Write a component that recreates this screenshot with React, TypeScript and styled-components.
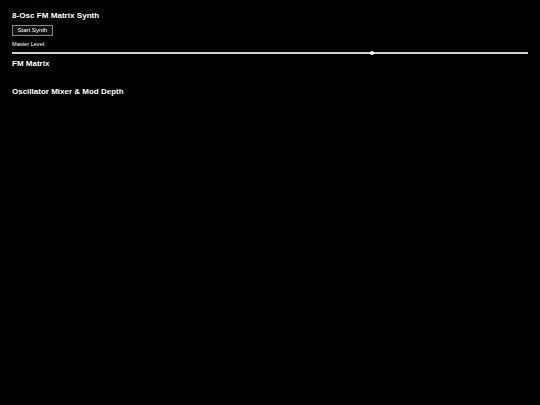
import React, { useState } from "react";
import styled, { createGlobalStyle } from "styled-components";

const GlobalStyle = createGlobalStyle`
  html, body {
    margin: 0;
    padding: 0;
    background: #000;
    color: #fff;
    font-family: "Liberation Sans", Arial, sans-serif;
  }
`;

const Page = styled.div`
  padding: 11px 12px;
  display: flex;
  flex-direction: column;
  align-items: flex-start;
`;

const Title = styled.h1`
  font-size: 8.1px;
  font-weight: bold;
  margin: 0;
  line-height: 10px;
`;

const Button = styled.button`
  font-family: inherit;
  font-size: 6px;
  color: #fff;
  background: #111;
  border: 1px solid #888;
  padding: 0 4.5px;
  margin-top: 4px;
  height: 11px;
  line-height: 9px;
  cursor: pointer;
`;

const Label = styled.label`
  font-size: 5.6px;
  margin-top: 5px;
  line-height: 6px;
`;

const Slider = styled.input`
  -webkit-appearance: none;
  appearance: none;
  display: block;
  width: 100%;
  height: 2px;
  margin: 5px 0 0;
  background: #d0d0d0;
  outline: none;

  &::-webkit-slider-thumb {
    -webkit-appearance: none;
    width: 4px;
    height: 4px;
    border-radius: 50%;
    background: #fff;
  }
`;

const Section = styled.h2<{ $gap: number }>`
  font-size: 8px;
  font-weight: bold;
  margin: ${(p) => p.$gap}px 0 0;
  line-height: 10px;
`;

const Matrix = styled.div`
  height: 18px;
`;

export default function App() {
  const [level, setLevel] = useState(0.7);
  const [running, setRunning] = useState(false);
  return (
    <>
      <GlobalStyle />
      <Page>
        <Title>8-Osc FM Matrix Synth</Title>
        <Button onClick={() => setRunning(!running)}>
          {running ? "Stop Synth" : "Start Synth"}
        </Button>
        <Label>Master Level:</Label>
        <Slider
          type="range"
          min={0}
          max={1}
          step={0.01}
          value={level}
          onChange={(e) => setLevel(parseFloat(e.target.value))}
        />
        <Section $gap={4.5}>FM Matrix</Section>
        <Matrix />
        <Section $gap={0}>Oscillator Mixer &amp; Mod Depth</Section>
      </Page>
    </>
  );
}
